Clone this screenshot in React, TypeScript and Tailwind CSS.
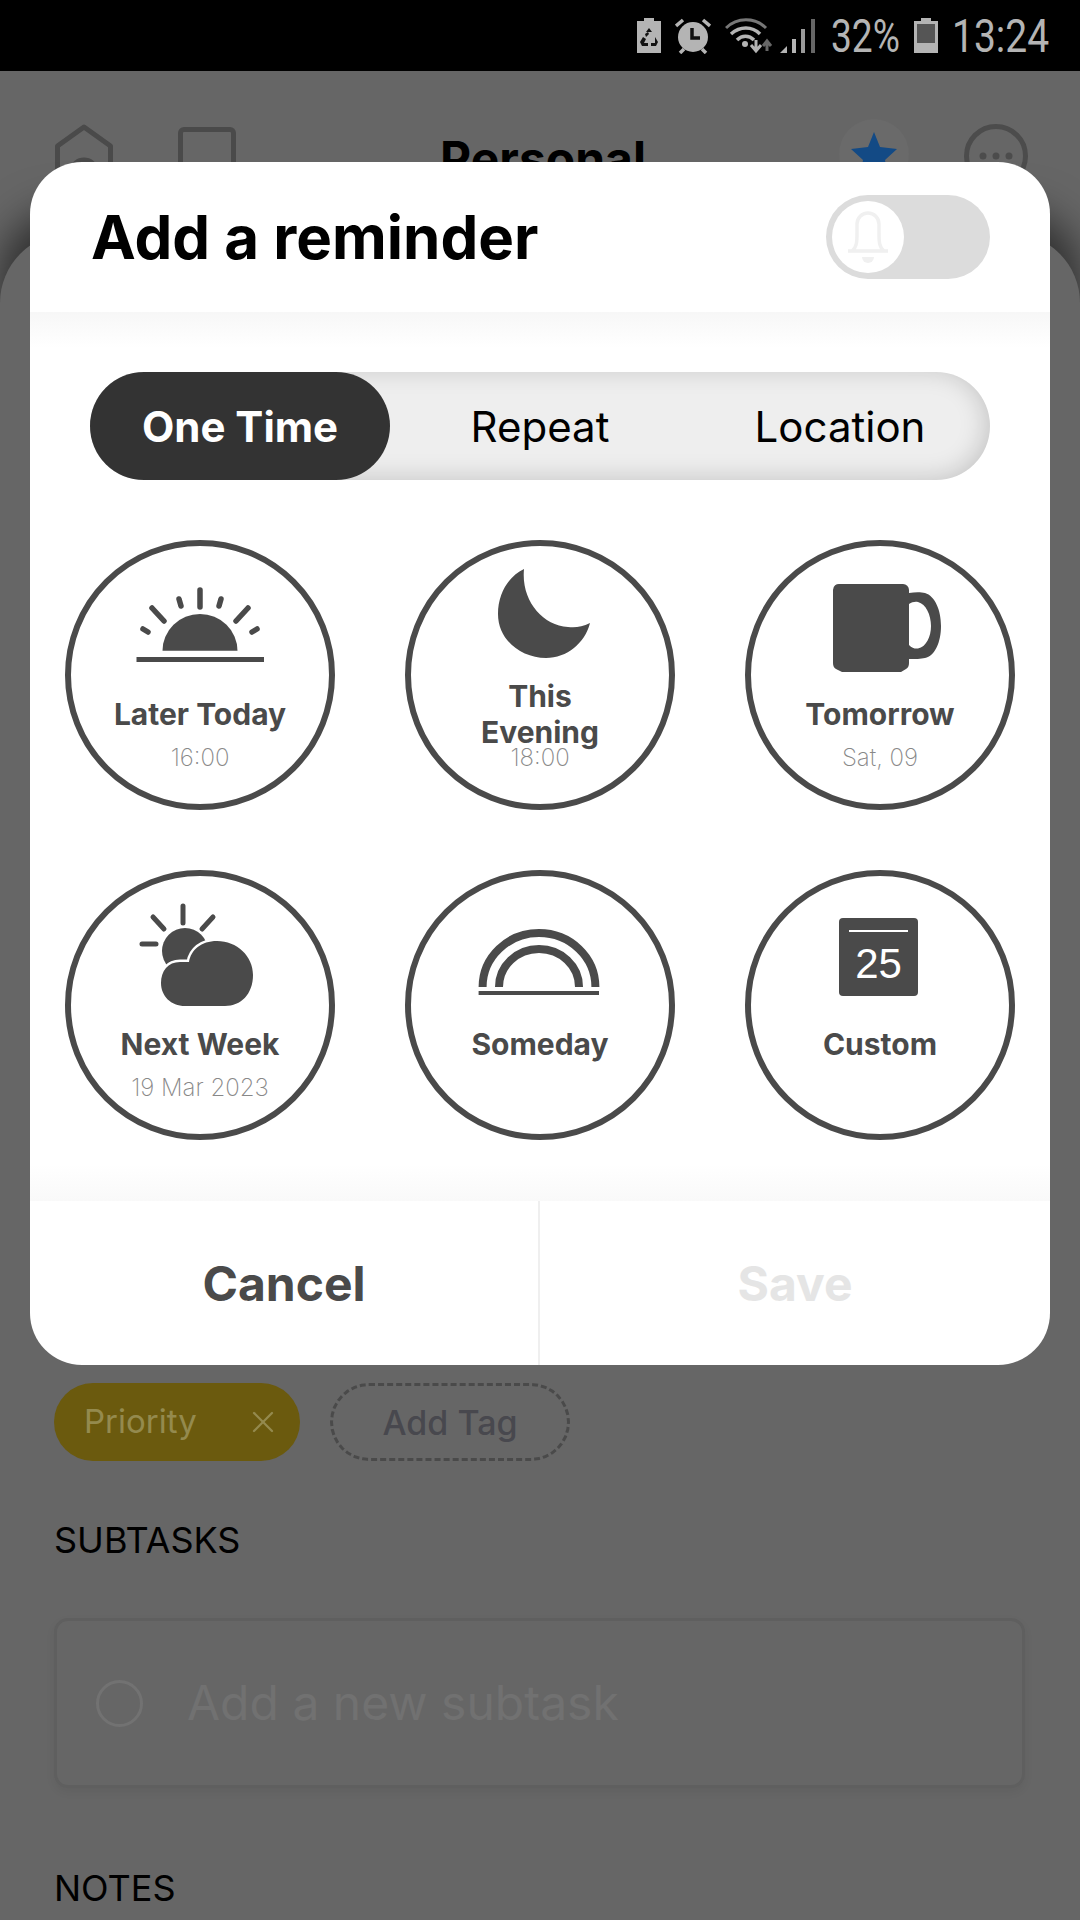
import { X } from "lucide-react";

const INK = "#4a4a4a";

function StatusIcons() {
  return (
    <>
      <svg width="24" height="35" viewBox="0 0 24 35" className="mr-[14px]">
        <path d="M7 0h10v3h7v32H0V3h7z" fill="#b4b4b4" />
        <path d="M12 10l3 4h-6zM6 19l3 2-2 4h4v3H5l-2-4zM18 19l3 5-2 4h-5v-3h4zM8 16l3-2 1 2-3 3z" fill="#111" />
      </svg>
      <svg width="36" height="36" viewBox="0 0 36 36" className="mr-[14px]">
        <circle cx="18" cy="19" r="15" fill="#b4b4b4" />
        <path d="M17 10v10h8" stroke="#111" strokeWidth="3.5" fill="none" />
        <path d="M1 8l7-6M35 8l-7-6M5 35l4-4M31 35l-4-4" stroke="#b4b4b4" strokeWidth="3.5" />
      </svg>
      <svg width="48" height="37" viewBox="0 0 48 37" className="mr-[7px]">
        <path d="M1 11C12 0 30 0 41 11" stroke="#777" strokeWidth="3" fill="none" />
        <path d="M6 17c9-8 21-8 29 0" stroke="#b4b4b4" strokeWidth="3.5" fill="none" />
        <path d="M12 23c5-5 12-5 17 0" stroke="#b4b4b4" strokeWidth="3.5" fill="none" />
        <circle cx="20" cy="27" r="3" fill="#b4b4b4" />
        <path d="M31 23v9M26 28l5 6 5-6" stroke="#b4b4b4" strokeWidth="3" fill="none" />
        <path d="M42 34v-9M38 29l4-5 4 5" stroke="#666" strokeWidth="3" fill="none" />
      </svg>
      <svg width="35" height="36" viewBox="0 0 35 36" className="mr-[16px]">
        <path d="M0 35L7 28V35z" fill="#b4b4b4" />
        <rect x="12" y="21" width="4" height="14" fill="#b4b4b4" />
        <rect x="21" y="11" width="4" height="24" fill="#9a9a9a" />
        <rect x="31" y="1" width="4" height="34" fill="#666" />
      </svg>
      <span className="inline-block w-[71px] text-[47px] leading-[45px] origin-left scale-x-[0.79] mr-[12px] whitespace-nowrap">32%</span>
      <svg width="24" height="35" viewBox="0 0 24 35" className="mr-[14px]">
        <path d="M7 0h10v3h7v32H0V3h7z" fill="#b4b4b4" />
        <rect x="3" y="6" width="18" height="19" fill="#555" />
      </svg>
      <span className="inline-block w-[97px] text-[47px] leading-[45px] origin-left scale-x-[0.83] whitespace-nowrap">13:24</span>
    </>
  );
}

function Background() {
  return (
    <div className="flex flex-col h-full bg-[#666666]">
      <div className="h-[71px] bg-black text-[#b4b4b4] flex items-center justify-end pr-[31px] shrink-0 font-['Roboto',sans-serif]">
        <StatusIcons />
      </div>
      <div className="h-[162px] shrink-0 relative flex pt-[53px] pl-[55px] pr-[52px]">
        <svg width="58" height="62" viewBox="0 0 58 62" className="mr-[65px]">
          <path d="M2.500 60V22L29 3l26.500 19v38" stroke={INK} strokeWidth="5" fill="none" strokeLinejoin="round" />
          <path d="M18 45a11 9 0 0 1 22 0" stroke={INK} strokeWidth="5" fill="none" />
        </svg>
        <div className="w-[58px] h-[60px] mt-[3px] rounded-[6px] border-[5px] border-[#4a4a4a]" />
        <div className="flex-1 text-center text-black font-bold text-[48px] leading-[58px] pl-[11px] pt-[6px]">Personal</div>
        <div className="w-[70px] h-[70px] rounded-full bg-[#6a6a6a] flex items-center justify-center mr-[55px] -mt-[5px]">
          <svg width="46" height="44" viewBox="0 0 46 44">
            <path d="M23 0l6 15 17 2-12 11 3 16-14-8-14 8 3-16L0 17l17-2z" fill="#134a85" />
          </svg>
        </div>
        <svg width="64" height="64" viewBox="0 0 64 64">
          <circle cx="32" cy="32" r="29.500" stroke="#4c4c4c" strokeWidth="5" fill="none" />
          <circle cx="19" cy="32" r="3.500" fill="#4c4c4c" />
          <circle cx="32" cy="32" r="3.500" fill="#4c4c4c" />
          <circle cx="45" cy="32" r="3.500" fill="#4c4c4c" />
        </svg>
      </div>
      <div className="flex-1 rounded-t-[70px] bg-[#666666] shadow-[0_-24px_40px_rgba(0,0,0,0.55)] pl-[54px] pr-[55px] pt-[1150px] z-0">
        <div className="flex gap-[30px]">
          <div className="w-[246px] h-[78px] rounded-full bg-[#6b5a0e] flex items-center justify-between pl-[30px] pr-[19px] text-[#948a4e] text-[33px]">
            <span>Priority</span>
            <X size={36} strokeWidth={1.5} />
          </div>
          <div className="w-[240px] h-[78px] rounded-full border-[3px] border-dashed border-[#4a4a4a] flex items-center justify-center text-[#48484e] text-[34px] font-medium">
            Add Tag
          </div>
        </div>
        <div className="text-black text-[36px] leading-[40px] mt-[59px]">SUBTASKS</div>
        <div className="h-[170px] mt-[58px] rounded-[14px] border-[3px] border-[#5f5f5f] shadow-[0_4px_10px_rgba(0,0,0,0.06)] flex items-center pl-[39px]">
          <div className="w-[47px] h-[47px] rounded-full border-[3px] border-[#727272]" />
          <span className="ml-[44px] text-[#717171] text-[48px]">Add a new subtask</span>
        </div>
        <div className="text-black text-[36px] leading-[40px] mt-[80px]">NOTES</div>
      </div>
    </div>
  );
}

function Sun() {
  return (
    <g stroke={INK} strokeLinecap="round" fill="none" strokeWidth="5.500">
      <path d="M97.500 110.700a37.500 36.700 0 0 1 75 0z" fill={INK} stroke="none" />
      <rect x="71.500" y="117" width="127.500" height="5" fill={INK} stroke="none" />
      <path d="M135 50v17M87 68l12 13M183 68l-12 13M114 59l2 7M156 59l-2 7M78 89l5 3M192 89l-5 3" />
    </g>
  );
}

function Moon() {
  return (
    <path
      d="M119 29C104 36 93 53 93 74C93 100 116 118 141 118C162 118 180 103 185 83C177 87 170 88 163 87C137 85 116 60 119 29Z"
      fill={INK}
    />
  );
}

function Mug() {
  return (
    <g fill={INK}>
      <path d="M95 44h63a6 6 0 0 1 6 6v73c0 3-1 5-3 6l-5 3H97l-6-3c-2-1-3-3-3-6V50a6 6 0 0 1 7-6z" />
      <path d="M164 53C170 52 176 52 180 53C190 56 196 70 196 86C196 102 190 116 180 118C176 119 170 119 164 119V105C167 108 170 109 173 108.500C181 107 186 97 186 86C186 75 181 64 173 62C170 61.500 167 62 164 64Z" />
    </g>
  );
}

function Cloud() {
  return (
    <g>
      <path d="M118 36v17M88 47l11 12M148 47l-11 12M77 74h14" stroke={INK} strokeWidth="5" strokeLinecap="round" fill="none" />
      <circle cx="120" cy="81" r="23" fill={INK} />
      <path
        d="M120 136C106 136 96 126 96 113C96 101 103 92 115 92C118 92 121 92 124 92C126 80 136 71 152 71C172 71 188 86 188 105C188 124 176 136 160 136Z"
        fill={INK}
        stroke="#ffffff"
        strokeWidth="5"
        paintOrder="stroke"
      />
    </g>
  );
}

function Rainbow() {
  return (
    <g fill="none" stroke={INK} strokeWidth="8">
      <path d="M77.600 117A56.400 54 0 0 1 190.400 117" />
      <path d="M94 117A40 38 0 0 1 174 117" />
      <rect x="73.600" y="121" width="120.400" height="4" fill={INK} stroke="none" />
    </g>
  );
}

function Calendar() {
  return (
    <g>
      <rect x="94" y="48" width="79" height="78" rx="4" fill={INK} />
      <rect x="104" y="60" width="59" height="2" fill="#ffffff" />
      <text x="133.500" y="108" textAnchor="middle" fontSize="42" fontFamily="Liberation Sans, sans-serif" fill="#ffffff">
        25
      </text>
    </g>
  );
}

const OPTIONS = [
  { label: "Later Today", sub: "16:00", icon: <Sun /> },
  { label: "This Evening", sub: "18:00", icon: <Moon /> },
  { label: "Tomorrow", sub: "Sat, 09", icon: <Mug /> },
  { label: "Next Week", sub: "19 Mar 2023", icon: <Cloud /> },
  { label: "Someday", sub: "", icon: <Rainbow /> },
  { label: "Custom", sub: "", icon: <Calendar /> },
];

function Dialog() {
  return (
    <div className="absolute left-[30px] top-[162px] w-[1020px] h-[1203px] bg-white rounded-[52px] overflow-hidden flex flex-col">
      <div className="h-[150px] shrink-0 flex items-center justify-between pl-[61px] pr-[60px]">
        <h1 className="text-[60px] font-bold text-black">Add a reminder</h1>
        <div className="w-[164px] h-[84px] rounded-full bg-[#dcdcdc] p-[6px]">
          <div className="w-[72px] h-[72px] rounded-full bg-white flex items-center justify-center">
            <svg width="44" height="56" viewBox="0 0 44 56" fill="none" stroke="#f0f0f0" strokeWidth="3.500">
              <path d="M2 42h40M6 42c5-4 5-10 5-18V15a11 11 0 0 1 22 0v9c0 8 0 14 5 18" />
              <path d="M16 48a6 6 0 0 0 12 0z" fill="#f0f0f0" stroke="none" />
            </svg>
          </div>
        </div>
      </div>
      <div className="flex-1 bg-gradient-to-b from-[#f7f7f7] to-white to-[36px] bg-no-repeat pt-[60px]">
        <div className="mx-[60px] h-[108px] rounded-full bg-[#eeeeee] shadow-[inset_-4px_-2px_24px_rgba(0,0,0,0.17)] flex items-center text-[42px] text-black font-['Inter',sans-serif]">
          <div className="w-[300px] h-full rounded-full bg-[#333333] text-white font-bold flex items-center justify-center">One Time</div>
          <div className="w-[300px] text-center">Repeat</div>
          <div className="w-[300px] text-center">Location</div>
        </div>
        <div className="grid grid-cols-3 gap-y-[60px] justify-items-center px-[35px] pt-[60px] gap-x-[70px] w-fit">
          {OPTIONS.map((o) => (
            <div key={o.label} className="w-[270px] h-[270px] rounded-full border-[6px] border-[#4a4a4a] flex flex-col items-center">
              <svg width="258" height="140" viewBox="6 6 258 140" className="shrink-0">
                {o.icon}
              </svg>
              <div className="h-[35px] mt-[10px] w-[220px] shrink-0 flex items-center justify-center text-center text-[30px] leading-[36px] font-bold text-[#4a4a4a]">
                {o.label === "This Evening" ? <span className="w-[130px]">{o.label}</span> : o.label}
              </div>
              <div className="mt-[13px] text-[24px] leading-[28px] font-extralight text-[#888888] whitespace-nowrap">{o.sub}</div>
            </div>
          ))}
        </div>
      </div>
      <div className="h-[164px] shrink-0 flex text-[48px] font-bold relative">
        <div className="absolute -top-[36px] left-0 right-0 h-[36px] bg-gradient-to-b from-white to-[#f9f9f9]" />
        <div className="w-[510px] border-r-2 border-[#efefef] flex items-center justify-center text-[#4a4a4a] pt-[2px]">Cancel</div>
        <div className="flex-1 flex items-center justify-center text-[#e5e5e5] pt-[2px]">Save</div>
      </div>
    </div>
  );
}

export default function App() {
  return (
    <div className="relative w-[1080px] h-[1920px] overflow-hidden font-['Inter',sans-serif]">
      <Background />
      <Dialog />
    </div>
  );
}
